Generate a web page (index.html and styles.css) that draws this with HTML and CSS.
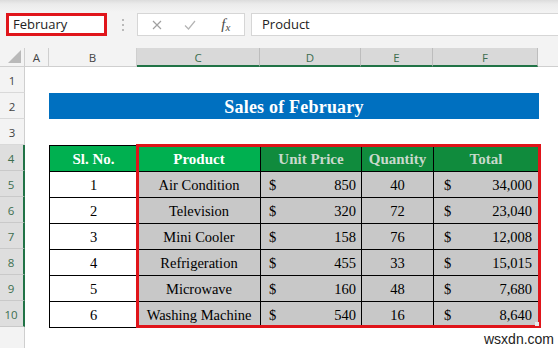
FILE: index.html
```html
<!DOCTYPE html>
<html>
<head>
<meta charset="utf-8">
<link rel="stylesheet" href="styles.css">
</head>
<body>
<div class="app">
  <div class="toolbar">
    <div class="namebox">February</div>
    <div class="dots"><svg width="4" height="14" viewBox="0 0 4 14"><circle cx="2" cy="2" r="1" fill="#a6a6a6"/><circle cx="2" cy="7" r="1" fill="#a6a6a6"/><circle cx="2" cy="12" r="1" fill="#a6a6a6"/></svg></div>
    <div class="fbtns">
      <span class="fbtn"><svg width="10" height="10" viewBox="0 0 10 10"><path d="M1 1 L9 9 M9 1 L1 9" stroke="#a0a0a0" stroke-width="1.2" fill="none"/></svg></span>
      <span class="fbtn"><svg width="12" height="10" viewBox="0 0 12 10"><path d="M1 5.5 L4.5 9 L11 1" stroke="#b4b4b4" stroke-width="1.2" fill="none"/></svg></span>
      <span class="fbtn fx"><i>f</i><i class="sub">x</i></span>
    </div>
    <div class="finput">Product</div>
  </div>
  <div class="sheet">
    <div class="rowheads">
      <div class="corner"><svg width="13" height="13" viewBox="0 0 13 13"><path d="M13 0 L13 13 L0 13 Z" fill="#b9b9b9"/></svg></div>
      <div class="rh">1</div>
      <div class="rh">2</div>
      <div class="rh">3</div>
      <div class="rh on">4</div>
      <div class="rh on">5</div>
      <div class="rh on">6</div>
      <div class="rh on">7</div>
      <div class="rh on">8</div>
      <div class="rh on">9</div>
      <div class="rh on">10</div>
      <div class="rh rest"></div>
    </div>
    <div class="cells">
      <div class="colheads">
        <div class="ch w-a">A</div>
        <div class="ch w-b">B</div>
        <div class="ch on w-c">C</div>
        <div class="ch on w-d">D</div>
        <div class="ch on w-e">E</div>
        <div class="ch on w-f">F</div>
        <div class="ch rest"></div>
      </div>
      <div class="body">
        <div class="blank"></div>
        <div class="title">Sales of February</div>
        <div class="blank"></div>
        <div class="tablewrap">
          <div class="tbl">
            <div class="c hd">Sl. No.</div>
            <div class="c hd">Product</div>
            <div class="c hd sel">Unit Price</div>
            <div class="c hd sel">Quantity</div>
            <div class="c hd sel">Total</div>

            <div class="c">1</div><div class="c g">Air Condition</div><div class="c g acc d"><span>$</span><span>850</span></div><div class="c g">40</div><div class="c g acc f"><span>$</span><span>34,000</span></div>
            <div class="c">2</div><div class="c g">Television</div><div class="c g acc d"><span>$</span><span>320</span></div><div class="c g">72</div><div class="c g acc f"><span>$</span><span>23,040</span></div>
            <div class="c">3</div><div class="c g">Mini Cooler</div><div class="c g acc d"><span>$</span><span>158</span></div><div class="c g">76</div><div class="c g acc f"><span>$</span><span>12,008</span></div>
            <div class="c">4</div><div class="c g">Refrigeration</div><div class="c g acc d"><span>$</span><span>455</span></div><div class="c g">33</div><div class="c g acc f"><span>$</span><span>15,015</span></div>
            <div class="c">5</div><div class="c g">Microwave</div><div class="c g acc d"><span>$</span><span>160</span></div><div class="c g">48</div><div class="c g acc f"><span>$</span><span>7,680</span></div>
            <div class="c">6</div><div class="c g">Washing Machine</div><div class="c g acc d"><span>$</span><span>540</span></div><div class="c g">16</div><div class="c g acc f"><span>$</span><span>8,640</span></div>
          </div>
          <div class="selbox"></div>
          <div class="handle"></div>
        </div>
      </div>
    </div>
  </div>
  <div class="watermark">wsxdn.com</div>
</div>
</body>
</html>
```
FILE: styles.css
```css
* { box-sizing: border-box; }
html, body { margin: 0; padding: 0; }
body { width: 558px; height: 348px; overflow: hidden; background: #fff; }
.app { position: relative; width: 558px; height: 348px; overflow: hidden; font-family: "Open Sans", "Noto Sans", sans-serif; }

.toolbar {
  height: 48px;
  display: flex;
  align-items: flex-start;
  padding-top: 13px;
  background: linear-gradient(#dcdcdc 0px, #ebebeb 4px, #f1f1f1 10px, #f3f3f3 12px);
}
.namebox {
  margin-left: 6px;
  width: 101px;
  height: 23px;
  border: 3px solid #e0151b;
  background: #fff;
  padding-left: 4px;
  font-size: 13px;
  line-height: 16px;
  color: #222;
}
.dots { width: 30px; height: 23px; display: flex; align-items: center; justify-content: center; padding-left: 1px; }
.fbtns {
  width: 108px;
  height: 23px;
  background: #fff;
  border: 1px solid #d6d6d6;
  display: flex;
  align-items: center;
  padding-left: 3px;
}
.fbtn { width: 34px; display: flex; justify-content: center; align-items: center; height: 21px; }
.fbtn.fx { width: 40px; font-family: "Liberation Serif", serif; color: #4a4a4a; font-size: 15px; padding-left: 2px; }
.fbtn.fx .sub { font-size: 11px; margin-top: 5px; margin-left: 0px; }
.finput {
  margin-left: 6px;
  flex: 1;
  height: 23px;
  background: #fff;
  border: 1px solid #d6d6d6;
  border-right: none;
  padding-left: 10px;
  font-size: 13px;
  line-height: 20px;
  color: #222;
}

.sheet { display: flex; }
.rowheads { width: 25px; flex: none; }
.corner {
  height: 19px;
  background: #f3f3f3;
  border-right: 1px solid #cfcfcf;
  border-bottom: 1px solid #cfcfcf;
  display: flex;
  align-items: flex-end;
  justify-content: flex-end;
  padding: 0 3px 3px 0;
}
.rh {
  height: 26px;
  background: #f3f3f3;
  border-right: 1px solid #cfcfcf;
  border-bottom: 1px solid #d9d9d9;
  font-size: 11.5px;
  color: #444;
  display: flex;
  align-items: center;
  justify-content: center;
  padding-top: 2px;
}
.rh.on { background: #dedede; color: #3c6e4f; border-right: 2px solid #217346; border-bottom-color: #c9c9c9; padding-right: 1px; }
.rh.rest { height: 40px; border-bottom: none; }

.cells { flex: 1; }
.colheads { display: flex; height: 19px; }
.ch {
  height: 19px;
  background: #f3f3f3;
  border-right: 1px solid #cfcfcf;
  border-bottom: 1px solid #cfcfcf;
  font-size: 11.5px;
  color: #444;
  display: flex;
  align-items: center;
  justify-content: center;
}
.ch.on { background: #d9d9d9; color: #3c6e4f; border-right-color: #bdbdbd; border-bottom: 2px solid #217346; padding-top: 1px; }
.w-a { width: 24px; }
.w-b { width: 88px; }
.w-c { width: 123px; }
.w-d { width: 101px; }
.w-e { width: 72px; }
.w-f { width: 105px; }
.ch.rest { flex: 1; border-right: none; }

.body { padding-left: 24px; }
.blank { height: 26px; }
.title {
  width: 490px;
  height: 26px;
  background: #0070c0;
  color: #fff;
  font-family: "Liberation Serif", serif;
  font-weight: bold;
  font-size: 18px;
  display: flex;
  align-items: center;
  justify-content: center;
  padding-top: 2px;
  letter-spacing: 0.2px;
}

.tablewrap { position: relative; width: 490px; }
.tbl {
  display: grid;
  grid-template-columns: 88px 123px 101px 72px 105px;
  grid-auto-rows: 26px;
  border-left: 1px solid #000;
  border-top: 1px solid #000;
  font-family: "Liberation Serif", serif;
  font-size: 14.5px;
  color: #000;
}
.c {
  border-right: 1px solid #000;
  border-bottom: 1px solid #000;
  display: flex;
  align-items: center;
  justify-content: center;
  padding-top: 1px;
  white-space: nowrap;
}
.c.hd { background: #00b050; color: #fff; font-weight: bold; font-size: 15px; }
.c.hd.sel { background: #108b3d; color: #c9d9cc; }
.c.g { background: #c8c8c8; }
.c.acc { justify-content: space-between; }
.c.acc.d { padding-left: 8px; padding-right: 5px; }
.c.acc.f { padding-left: 10px; padding-right: 6px; }

.selbox {
  position: absolute;
  left: 87px;
  top: -1px;
  width: 405px;
  height: 184px;
  border: 3px solid #e0141a;
  pointer-events: none;
}
.handle {
  position: absolute;
  left: 486px;
  top: 177px;
  width: 4px;
  height: 4px;
  background: #e8e8e8;
}

.watermark {
  position: absolute;
  left: 484px;
  top: 331px;
  font-family: "Liberation Sans", Arial, sans-serif;
  font-size: 14px;
  color: #222;
  line-height: 16px;
}
```
